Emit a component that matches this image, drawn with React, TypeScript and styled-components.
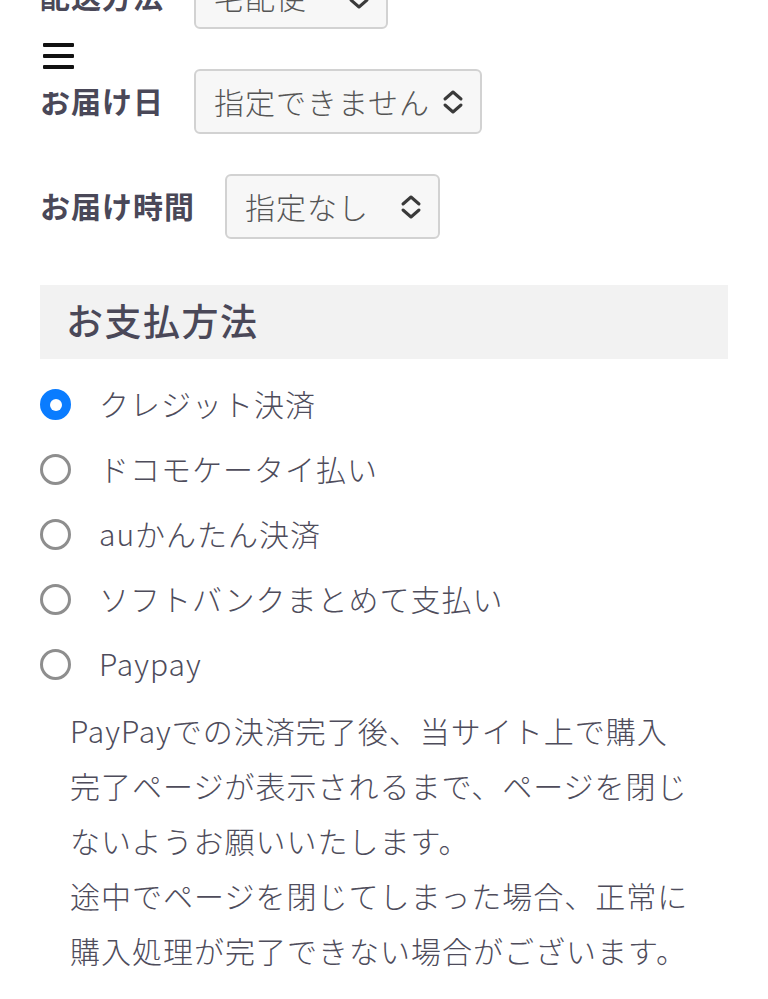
import React from 'react';
import styled, { createGlobalStyle } from 'styled-components';

const GlobalStyle = createGlobalStyle`
	html, body {
		margin: 0;
		padding: 0;
		background: #fff;
	}
	body {
		font-family: "Noto Sans CJK JP", "Noto Sans", sans-serif;
		color: #4e4c5b;
		overflow: hidden;
	}
`;

const MenuButton = styled.button`
	position: fixed;
	top: 30px;
	left: 28px;
	width: 35px;
	height: 62px;
	padding: 13px 0 0 15px;
	border: none;
	background: #fff;
	display: flex;
	flex-direction: column;
	gap: 7px;
	overflow: visible;
	z-index: 10;
`;

const Bar = styled.span`
	display: block;
	width: 31px;
	height: 4px;
	flex: none;
	background: #111;
	border-radius: 1px;
`;

const Page = styled.main`
	margin-top: -36px;
	padding: 0 40px;
`;

const Fields = styled.div`
	display: flex;
	flex-direction: column;
	gap: 40px;
`;

const Row = styled.div`
	display: flex;
	align-items: center;
	gap: 30px;
	height: 65px;
`;

const Label = styled.span`
	font-size: 30px;
	font-weight: 700;
	letter-spacing: 1px;
	color: #4a4858;
	margin-top: -3px;
`;

const SelectBox = styled.div<{ $width: number }>`
	box-sizing: border-box;
	width: ${(p) => p.$width}px;
	height: 65px;
	padding: 0 16px 0 18px;
	display: flex;
	align-items: center;
	justify-content: space-between;
	background: #f7f7f7;
	border: 2px solid #d2d2d2;
	border-radius: 6px;
	font-size: 30px;
	font-weight: 300;
	letter-spacing: 1px;
	color: #555;

	& > span {
		margin-top: -2px;
	}
`;

const Chevrons = () => (
	<svg width="22" height="26" viewBox="0 0 22 26" fill="none" stroke="#3a3a3a" strokeWidth="3" strokeLinecap="round" strokeLinejoin="round">
		<path d="M3 10 L11 3 L19 10" />
		<path d="M3 16 L11 23 L19 16" />
	</svg>
);

const Select: React.FC<{ value: string; width: number }> = ({ value, width }) => (
	<SelectBox $width={width}>
		<span>{value}</span>
		<Chevrons />
	</SelectBox>
);

const SectionTitle = styled.h2`
	margin: 46px 0 13px;
	height: 74px;
	padding: 0 26px 4px;
	box-sizing: border-box;
	display: flex;
	align-items: center;
	background: #f2f2f2;
	font-size: 37px;
	font-weight: 500;
	letter-spacing: 1.5px;
	color: #4a4858;
`;

const RadioList = styled.ul`
	list-style: none;
	margin: 0;
	padding: 0;
`;

const RadioRow = styled.li`
	display: flex;
	align-items: center;
	gap: 28px;
	height: 65px;
	font-size: 30px;
	font-weight: 300;
	letter-spacing: 1px;

	& > span:last-child {
		margin-top: -3px;
	}
`;

const RadioMark = styled.span<{ $checked?: boolean }>`
	box-sizing: border-box;
	width: 31px;
	height: 31px;
	flex: none;
	border-radius: 50%;
	display: flex;
	align-items: center;
	justify-content: center;
	background: ${(p) => (p.$checked ? '#0a7cff' : '#fff')};
	border: 3px solid ${(p) => (p.$checked ? '#0a7cff' : '#8e8e8e')};

	&::after {
		content: '';
		display: ${(p) => (p.$checked ? 'block' : 'none')};
		width: 12px;
		height: 12px;
		border-radius: 50%;
		background: #fff;
	}
`;

const Note = styled.p`
	margin: 6px 0 0;
	padding: 0 30px;
	font-size: 30px;
	font-weight: 300;
	letter-spacing: 1px;
	line-height: 55px;
`;

const payments = [
	'クレジット決済',
	'ドコモケータイ払い',
	'auかんたん決済',
	'ソフトバンクまとめて支払い',
	'Paypay',
];

export default function App() {
	return (
		<>
			<GlobalStyle />
			<MenuButton aria-label="menu">
				<Bar />
				<Bar />
				<Bar />
			</MenuButton>
			<Page>
				<Fields>
					<Row>
						<Label>配送方法</Label>
						<Select value="宅配便" width={194} />
					</Row>
					<Row>
						<Label>お届け日</Label>
						<Select value="指定できません" width={288} />
					</Row>
					<Row>
						<Label>お届け時間</Label>
						<Select value="指定なし" width={215} />
					</Row>
				</Fields>
				<SectionTitle>お支払方法</SectionTitle>
				<RadioList>
					{payments.map((name, i) => (
						<RadioRow key={name}>
							<RadioMark $checked={i === 0} />
							<span>{name}</span>
						</RadioRow>
					))}
				</RadioList>
				<Note>
					PayPayでの決済完了後、当サイト上で購入完了ページが表示されるまで、ページを閉じないようお願いいたします。
					<br />
					途中でページを閉じてしまった場合、正常に購入処理が完了できない場合がございます。
				</Note>
			</Page>
		</>
	);
}
